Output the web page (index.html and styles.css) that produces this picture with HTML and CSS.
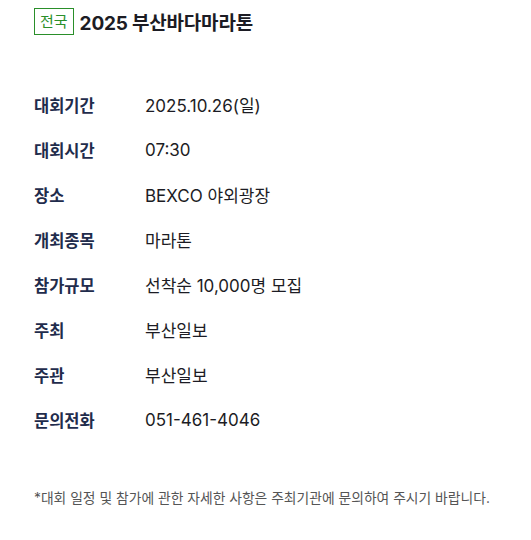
FILE: index.html
```html
<!DOCTYPE html>
<html lang="ko">
<head>
<meta charset="utf-8">
<link rel="stylesheet" href="styles.css">
</head>
<body>
<div class="page">
  <div class="title-row">
    <span class="badge">전국</span>
    <h1 class="title">2025 부산바다마라톤</h1>
  </div>
  <dl class="info">
    <div class="row"><dt>대회기간</dt><dd>2025.10.26(일)</dd></div>
    <div class="row"><dt>대회시간</dt><dd>07:30</dd></div>
    <div class="row"><dt>장소</dt><dd>BEXCO 야외광장</dd></div>
    <div class="row"><dt>개최종목</dt><dd>마라톤</dd></div>
    <div class="row"><dt>참가규모</dt><dd>선착순 10,000명 모집</dd></div>
    <div class="row"><dt>주최</dt><dd>부산일보</dd></div>
    <div class="row"><dt>주관</dt><dd>부산일보</dd></div>
    <div class="row"><dt>문의전화</dt><dd>051-461-4046</dd></div>
  </dl>
  <p class="note">*대회 일정 및 참가에 관한 자세한 사항은 주최기관에 문의하여 주시기 바랍니다.</p>
</div>
</body>
</html>
```
FILE: styles.css
```css
html, body {
  margin: 0;
  padding: 0;
  background: #fff;
}
body {
  font-family: Inter, "Noto Sans CJK KR", sans-serif;
  color: #222;
}
.page {
  padding: 8px 20px 0 34px;
}
.title-row {
  display: flex;
  align-items: center;
  gap: 6px;
  height: 27px;
}
.badge {
  box-sizing: border-box;
  height: 27px;
  padding: 0 5px;
  border: 1px solid #2a8f2a;
  color: #2a8f2a;
  font-size: 15px;
  line-height: 25px;
  display: flex;
  align-items: center;
}
.title {
  margin: 0;
  font-size: 19px;
  font-weight: 700;
  color: #1c1c24;
  letter-spacing: -0.2px;
}
.info {
  margin: 47px 0 0;
  padding: 0;
}
.row {
  display: flex;
  align-items: center;
  height: 45px;
}
.row dt {
  width: 111px;
  font-size: 16.5px;
  font-weight: 700;
  color: #1f2c4c;
}
.row dd {
  margin: 0;
  font-size: 17px;
  color: #1c1c24;
}
.note {
  margin: 46px 0 0;
  font-size: 13.8px;
  color: #555;
  line-height: 20px;
}
```
